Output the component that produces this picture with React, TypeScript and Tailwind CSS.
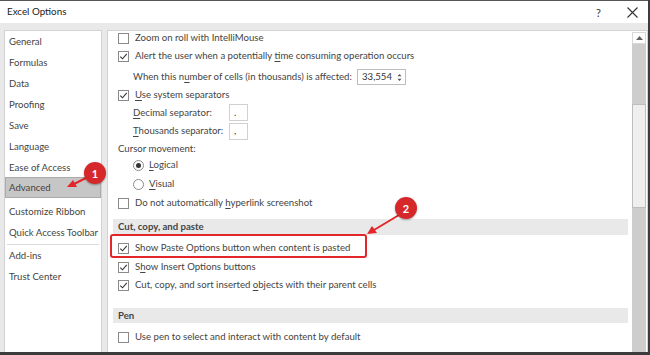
import React from "react";

const F = { fontFamily: 'Lato, "Open Sans", Arial, sans-serif' };

function Check({ on }: { on?: boolean }) {
  return (
    <div className="w-[11px] h-[11px] border border-[#8a8a8a] bg-white flex items-center justify-center shrink-0">
      {on && (
        <svg width="9" height="9" viewBox="0 0 9 9">
          <path d="M1.3 4.6 L3.5 6.8 L7.8 1.8" fill="none" stroke="#333" strokeWidth="1.1" />
        </svg>
      )}
    </div>
  );
}

function Radio({ on }: { on?: boolean }) {
  return (
    <div className="w-[11px] h-[11px] rounded-full border border-[#8a8a8a] bg-white flex items-center justify-center shrink-0">
      {on && <div className="w-[5px] h-[5px] rounded-full bg-[#333]" />}
    </div>
  );
}

function U({ children }: { children: React.ReactNode }) {
  return <span className="underline underline-offset-[2px]">{children}</span>;
}

function NavItem({ label, active }: { label: string; active?: boolean }) {
  return (
    <div
      className={
        "h-[21px] flex items-center whitespace-nowrap " +
        (active ? "bg-[#c6c6c6] border border-[#ababab] pl-[3px]" : "pl-[4px]")
      }
    >
      {label}
    </div>
  );
}

export default function App() {
  return (
    <div
      className="relative w-[650px] h-[355px] overflow-hidden bg-[#e9e9e9] text-[#444] text-[9.6px] leading-none whitespace-nowrap"
      style={F}
    >
      {/* Title bar */}
      <div className="h-[23px] bg-white flex items-center justify-between border-t border-[#555]">
        <div className="pl-[7px] text-[9.8px] text-[#222]">Excel Options</div>
        <div className="flex items-center gap-[26px] pr-[12px] text-[#333]">
          <span className="text-[11px]">?</span>
          <svg width="11" height="11" viewBox="0 0 11 11">
            <path d="M0.5 0.5 L10.5 10.5 M10.5 0.5 L0.5 10.5" stroke="#333" strokeWidth="1.1" />
          </svg>
        </div>
      </div>

      {/* Body */}
      <div className="flex pt-[7px] h-[329px]">
        {/* Nav */}
        <div className="ml-[4px] w-[98px] bg-white border border-[#d2d2d2] border-b-0 flex flex-col">
          <NavItem label="General" />
          <NavItem label="Formulas" />
          <NavItem label="Data" />
          <NavItem label="Proofing" />
          <NavItem label="Save" />
          <NavItem label="Language" />
          <NavItem label="Ease of Access" />
          <div className="mt-[-1px]">
            <NavItem label="Advanced" active />
          </div>
          <div className="mt-[3px]">
            <NavItem label="Customize Ribbon" />
            <NavItem label="Quick Access Toolbar" />
          </div>
          <div className="h-px bg-[#dcdcdc] mx-[2px] mt-[1px]" />
          <NavItem label="Add-ins" />
          <NavItem label="Trust Center" />
        </div>

        {/* Content */}
        <div className="relative ml-[5px] w-[541px] bg-white border border-[#d2d2d2] border-b-0 flex">
          <div className="flex-1 flex flex-col pl-[10px]">
            <div className="h-[14px] flex items-center gap-[6px]">
              <Check />
              <span>Zoom on roll with IntelliMouse</span>
            </div>
            <div className="h-[22px] flex items-center gap-[6px]">
              <Check on />
              <span>
                Alert the user when a potentially <U>t</U>ime consuming operation occurs
              </span>
            </div>
            <div className="h-[20px] flex items-center pl-[15px]">
              <span className="w-[224px]">
                When this n<U>u</U>mber of cells (in thousands) is affected:
              </span>
              <div className="w-[49px] h-[16px] border border-[#bdbdbd] flex items-center justify-between pl-[4px] pr-[3px] text-[#333]">
                <span>33,554</span>
                <svg width="5" height="9" viewBox="0 0 5 9">
                  <path d="M0.5 3.2 L2.5 1 L4.5 3.2 Z M0.5 5.8 L2.5 8 L4.5 5.8 Z" fill="#555" />
                </svg>
              </div>
            </div>
            <div className="h-[16px] flex items-center gap-[6px]">
              <Check on />
              <span>
                <U>U</U>se system separators
              </span>
            </div>
            <div className="h-[19px] flex items-center pl-[15px]">
              <span className="w-[96px]">
                <U>D</U>ecimal separator:
              </span>
              <div className="w-[19px] h-[17px] border border-[#d0d0d0] flex items-center pl-[4px] text-[#333]">.</div>
            </div>
            <div className="h-[18px] flex items-center pl-[15px]">
              <span className="w-[96px]">
                <U>T</U>housands separator:
              </span>
              <div className="w-[19px] h-[17px] border border-[#d0d0d0] flex items-center pl-[4px] text-[#333]">,</div>
            </div>
            <div className="h-[18px] flex items-center">
              <span>Cursor movement:</span>
            </div>
            <div className="h-[14px] flex items-center gap-[5px] pl-[15px]">
              <Radio on />
              <span>
                <U>L</U>ogical
              </span>
            </div>
            <div className="h-[24px] flex items-center gap-[5px] pl-[15px]">
              <Radio />
              <span>
                <U>V</U>isual
              </span>
            </div>
            <div className="h-[14px] flex items-center gap-[6px]">
              <Check />
              <span>
                Do not automatically <U>h</U>yperlink screenshot
              </span>
            </div>
            <div className="mt-[9px] h-[16px] w-[515px] -ml-[5px] pl-[5px] bg-[#e9e9e9] flex items-center font-bold text-[#444]">
              Cut, copy, and paste
            </div>
            <div className="h-[26px] flex items-center gap-[6px]">
              <Check on />
              <span>Show Paste Options button when content is pasted</span>
            </div>
            <div className="h-[12px] flex items-center gap-[6px]">
              <Check on />
              <span>
                S<U>h</U>ow Insert Options buttons
              </span>
            </div>
            <div className="h-[24px] flex items-center gap-[6px]">
              <Check on />
              <span>
                Cut, copy, and sort inserted <U>o</U>bjects with their parent cells
              </span>
            </div>
            <div className="mt-[11px] h-[15px] w-[515px] -ml-[5px] pl-[5px] bg-[#e9e9e9] flex items-center font-bold text-[#444]">
              Pen
            </div>
            <div className="h-[28px] flex items-center gap-[6px]">
              <Check />
              <span>Use pen to select and interact with content by default</span>
            </div>
          </div>

          {/* Scrollbar */}
          <div className="w-[14px] mr-[1px] mt-[1px] flex flex-col bg-[#cdcdcd]">
            <div className="h-[12px] bg-white border border-[#d8d8d8] flex items-center justify-center">
              <svg width="7" height="4" viewBox="0 0 7 4">
                <path d="M0 4 L3.5 0 L7 4 Z" fill="#606060" />
              </svg>
            </div>
            <div className="mt-[60px] h-[104px] bg-[#efefef] border border-[#bdbdbd]" />
          </div>

          {/* Red highlight */}
          <div className="absolute left-[2px] top-[203px] w-[257px] h-[24px] border-2 border-[#e3262a] rounded-[3px]" />
        </div>
      </div>

      {/* Window edges */}
      <div className="absolute right-0 top-0 w-[2px] h-full bg-[#3c3c3c]" />
      <div className="absolute left-0 bottom-0 w-full h-[3px] bg-[#3c3c3c]" />

      {/* Arrows */}
      <svg className="absolute left-0 top-0" width="650" height="355" viewBox="0 0 650 355">
        <line x1="86" y1="178" x2="74" y2="184" stroke="#e3262a" strokeWidth="2" />
        <path d="M67 187 L73 180 L77 187 Z" fill="#e3262a" />
        <line x1="399" y1="215" x2="374" y2="230" stroke="#e3262a" strokeWidth="2" />
        <path d="M367 234 L372 226 L377 233 Z" fill="#e3262a" />
      </svg>

      {/* Badges */}
      <div className="absolute left-[84px] top-[162px] w-[22px] h-[22px] rounded-full bg-[#d6282b] shadow-[0_1px_2px_rgba(0,0,0,0.35)] flex items-center justify-center text-white font-bold text-[11px]">
        1
      </div>
      <div className="absolute left-[395px] top-[197px] w-[22px] h-[22px] rounded-full bg-[#d6282b] shadow-[0_1px_2px_rgba(0,0,0,0.35)] flex items-center justify-center text-white font-bold text-[11px]">
        2
      </div>
    </div>
  );
}
